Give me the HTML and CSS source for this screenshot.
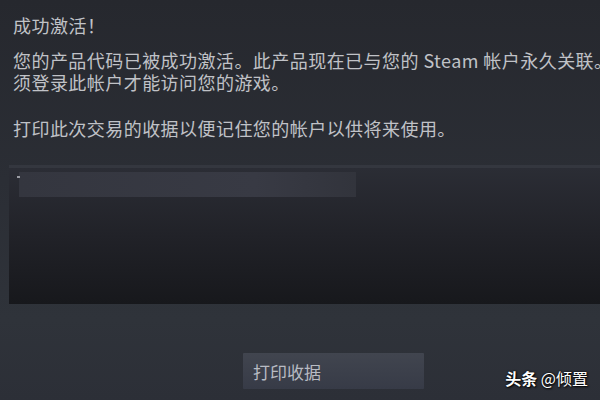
FILE: index.html
```html
<!DOCTYPE html>
<html lang="zh-CN">
<head>
  <meta charset="UTF-8" />
  <meta name="viewport" content="width=device-width, initial-scale=1.0" />
  <title>成功激活</title>
  <link rel="stylesheet" href="styles.css">
</head>
<body>
  <div class="page">
    <div class="message">
      <h1>成功激活！</h1>
      <p class="desc">您的产品代码已被成功激活。此产品现在已与您的 Steam 帐户永久关联。您必<br>须登录此帐户才能访问您的游戏。</p>
      <p class="desc print-hint">打印此次交易的收据以便记住您的帐户以供将来使用。</p>
    </div>
    <div class="receipt">
      <div class="receipt-row"><span class="cursor"></span></div>
    </div>
    <div class="actions">
      <button class="print-btn">打印收据</button>
    </div>
  </div>
  <div class="watermark"><strong>头条</strong> @倾置</div>
</body>
</html>
```

FILE: styles.css
```css
* { box-sizing: border-box; }
body {
  margin: 0;
  width: 600px;
  height: 400px;
  overflow: hidden;
  position: relative;
  background: linear-gradient(#26282e, #2b2e35 45%, #2f333a 80%, #2c2f37);
  font-family: "Noto Sans CJK SC", "Noto Sans", sans-serif;
  color: #c0c2c7;
}
.page { width: 700px; }
.message { padding: 14px 0 0 13px; }
h1 {
  margin: 0;
  font-size: 18px;
  font-weight: normal;
  line-height: 22px;
  letter-spacing: 0.5px;
}
.desc {
  margin: 13px 0 0;
  font-size: 18px;
  line-height: 22px;
  letter-spacing: 0.45px;
  white-space: nowrap;
}
.print-hint { margin-top: 24px; }
.receipt {
  margin: 26px 0 0 9px;
  height: 139px;
  border-top: 3px solid #34373f;
  background: linear-gradient(#2b2d35, #212228 50%, #17181c);
  padding: 4px 0 0 10px;
}
.receipt-row {
  width: 337px;
  height: 25px;
  background: linear-gradient(90deg, #34363f, #383a44 70%, #32343c);
  position: relative;
}
.cursor {
  position: absolute;
  left: -2px;
  top: 4px;
  width: 3px;
  height: 2px;
  background: #9a9ca3;
}
.actions {
  padding: 49px 0 0 243px;
}
.print-btn {
  width: 181px;
  height: 36px;
  border: none;
  border-radius: 1px;
  background: linear-gradient(#41454f, #373b47);
  color: #b8bbc3;
  font-family: "Noto Sans CJK SC", "Noto Sans", sans-serif;
  font-size: 17px;
  text-align: left;
  padding: 0 0 0 10px;
}
.watermark {
  position: absolute;
  right: 12px;
  bottom: 10px;
  color: #fff;
  font-size: 16px;
  text-shadow: 0 0 2px #000, 1px 1px 2px #000;
}
.watermark strong { font-weight: bold; }
```
